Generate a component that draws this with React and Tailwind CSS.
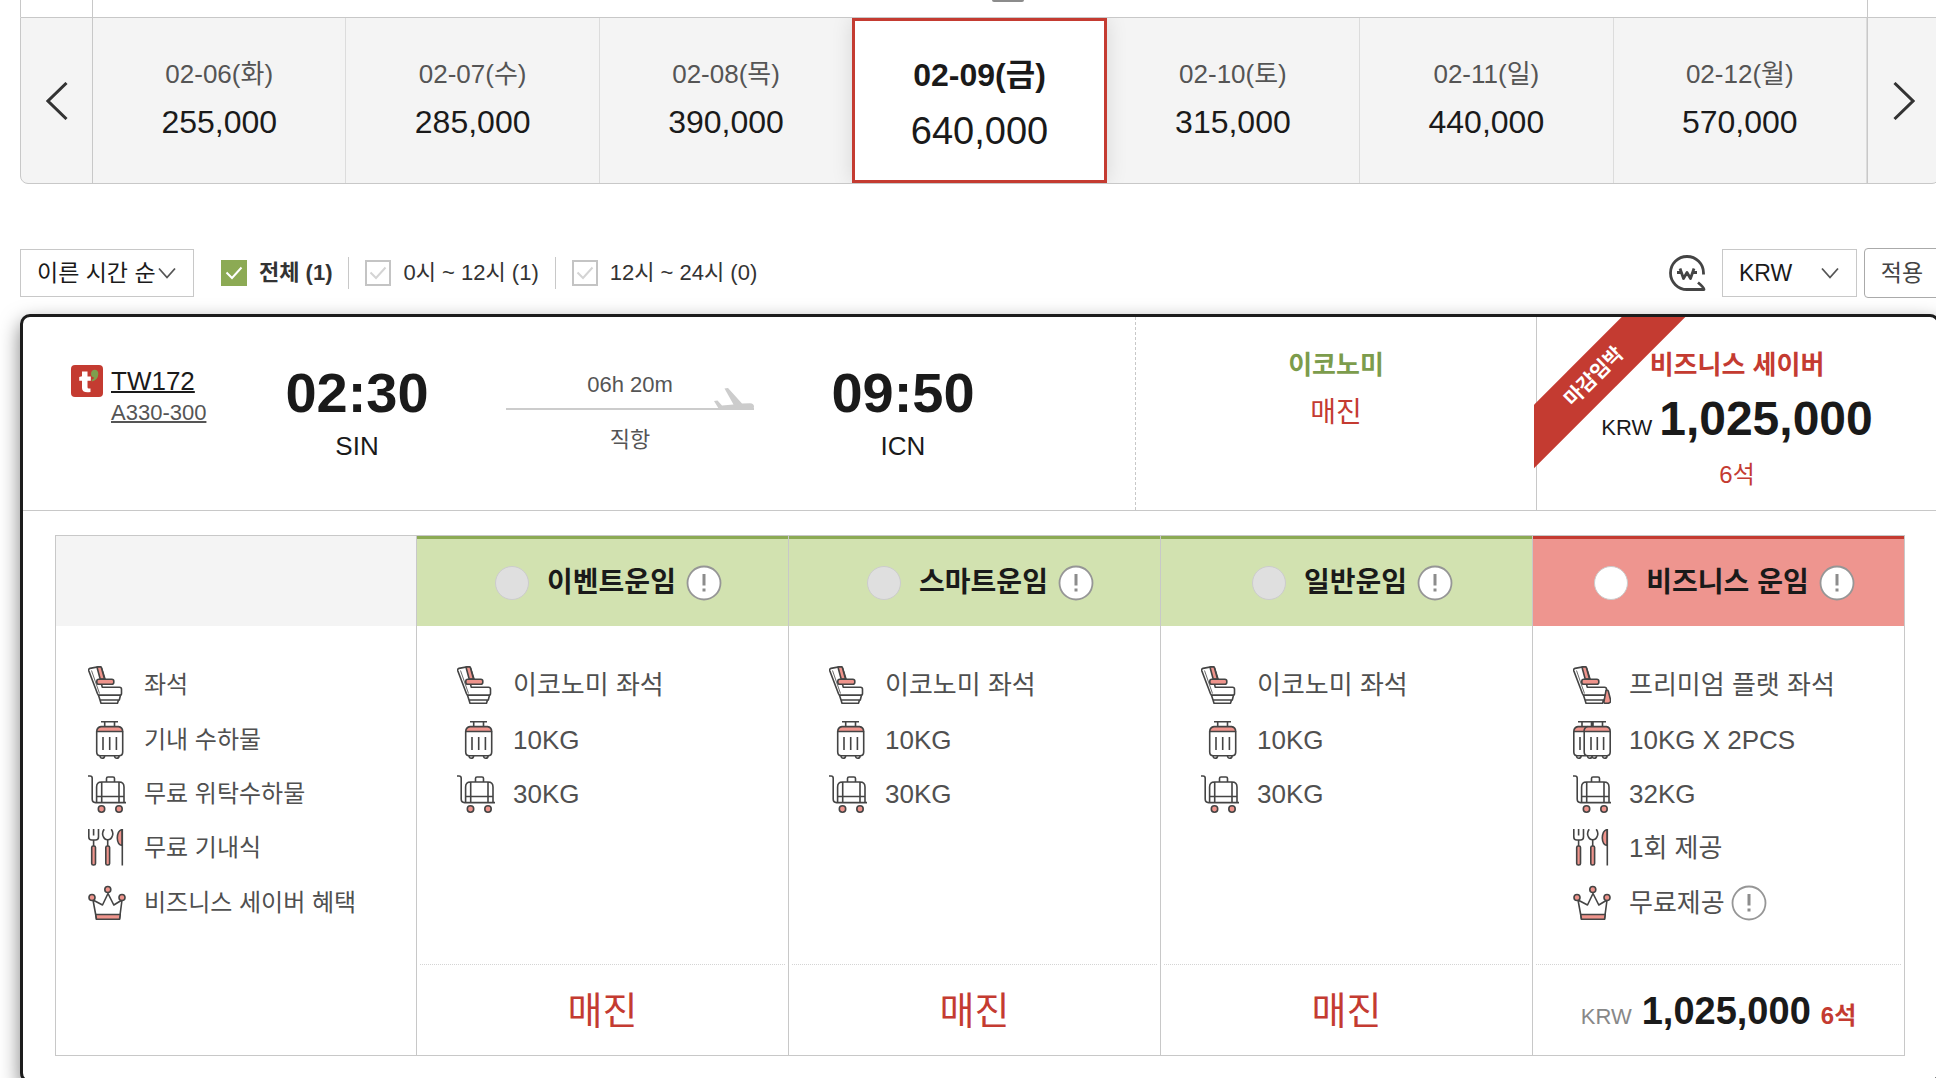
import { useState } from 'react'
import clsx from 'clsx'

const DATES = [
  { id: '0206', date: '02-06(화)', price: '255,000' },
  { id: '0207', date: '02-07(수)', price: '285,000' },
  { id: '0208', date: '02-08(목)', price: '390,000' },
  { id: '0209', date: '02-09(금)', price: '640,000' },
  { id: '0210', date: '02-10(토)', price: '315,000' },
  { id: '0211', date: '02-11(일)', price: '440,000' },
  { id: '0212', date: '02-12(월)', price: '570,000' },
]

const TIME_FILTERS = [
  { id: 'all', label: '전체 (1)' },
  { id: 'am', label: '0시 ~ 12시 (1)' },
  { id: 'pm', label: '12시 ~ 24시 (0)' },
]

const LEGEND = [
  { icon: SeatIcon, text: '좌석' },
  { icon: CarryOnIcon, text: '기내 수하물' },
  { icon: TrolleyIcon, text: '무료 위탁수하물' },
  { icon: MealIcon, text: '무료 기내식' },
  { icon: CrownIcon, text: '비즈니스 세이버 혜택' },
]

const ECONOMY_ITEMS = [
  { icon: SeatIcon, text: '이코노미 좌석' },
  { icon: CarryOnIcon, text: '10KG' },
  { icon: TrolleyIcon, text: '30KG' },
]

const FARES = [
  { id: 'event', name: '이벤트운임', soldOut: true, items: ECONOMY_ITEMS },
  { id: 'smart', name: '스마트운임', soldOut: true, items: ECONOMY_ITEMS },
  { id: 'normal', name: '일반운임', soldOut: true, items: ECONOMY_ITEMS },
  {
    id: 'business',
    name: '비즈니스 운임',
    business: true,
    items: [
      { icon: FlatSeatIcon, text: '프리미엄 플랫 좌석' },
      { icon: DoubleCarryOnIcon, text: '10KG X 2PCS' },
      { icon: TrolleyIcon, text: '32KG' },
      { icon: MealIcon, text: '1회 제공' },
      { icon: CrownIcon, text: '무료제공', info: true },
    ],
  },
]

function LineIcon({ children }) {
  return (
    <svg
      viewBox="0 0 38 38"
      className="size-[38px] shrink-0"
      fill="none"
      stroke="#444"
      strokeWidth="1.6"
      strokeLinejoin="round"
      aria-hidden="true"
    >
      {children}
    </svg>
  )
}

function SeatBody() {
  return (
    <>
      <path d="M.7 4.5Q.3 2.8 2 2.4L11 .6q2-.3 2.6 1.6L17 13l-3.500 5 .7 3.200H31.500q2 0 2 2V27.500q0 1.800-2 1.800H11.500q-1.500 0-2-1.500Z" />
      <path d="M3.500 4.500 11.500 27.500" strokeWidth=".8" />
      <path d="M9 1.200 12.200.8q1 0 1.300 1.200L16.500 13h-4.300Z" fill="#ef948c" />
      <rect x="8.800" y="13.200" width="17" height="5" rx="2" fill="#ef948c" />
      <path d="M10.500 29.300h22l-1.200 4.700H12ZM12 34h18.500l-1 3.300H13Z" />
    </>
  )
}

function SeatIcon() {
  return (
    <LineIcon>
      <SeatBody />
    </LineIcon>
  )
}

function FlatSeatIcon() {
  return (
    <LineIcon>
      <SeatBody />
      <path d="M33 24.500q1.800-.8 2.400 1l2.200 8.500q.4 3-2.600 3.300h-2.500q-2 0-1.500-2Z" fill="#ef948c" />
    </LineIcon>
  )
}

function CarryOnIcon() {
  return (
    <LineIcon>
      <path d="M13 .8H30M16.700.7V5.500M26.500.7V5.500" />
      <path d="M8.700 10.500Q9 6 13 5.600H30.500Q34.500 6 34.700 10.500Z" fill="#ef948c" />
      <path d="M8.700 10.500V31q0 3.700 3.700 3.700H31q3.700 0 3.700-3.700V10.500" />
      <path d="M15 16V29M21.700 16V29M28.400 16V29" />
      <path d="M12 35q.3 2.200 2.300 2.200T16.700 35M26.500 35q.3 2.200 2.300 2.200T31.200 35" />
    </LineIcon>
  )
}

function DoubleCarryOnIcon() {
  return (
    <LineIcon>
      <path d="M5 .8H33M9 .7V5.500M18.500 .7V5.500M20 .7V5.500M29.500.7V5.500" />
      <path d="M.8 10.500Q1 6 5 5.600H33.300Q37.200 6 37.200 10.500Z" fill="#ef948c" />
      <path d="M11 10.500Q11.200 6.500 14.500 5.600" />
      <path d="M.8 10.500V31q0 3.700 3.700 3.700H13.500M11.200 10.500V31q0 3.700 3.700 3.700H33.500q3.700 0 3.700-3.700V10.500" />
      <path d="M7 16V29M18 16V29M24.300 16V29M30.600 16V29" />
      <path d="M3.500 35q.3 2.200 2.300 2.200T8.200 35M14.500 35q.3 2.200 2.300 2.200T19.200 35M19 35q.3 2.200 2.300 2.200T23.700 35M29.500 35q.3 2.200 2.300 2.200T34.200 35" />
    </LineIcon>
  )
}

function TrolleyIcon() {
  return (
    <LineIcon>
      <path d="M0 1H2Q4.200 1 4.200 3.200V24Q4.200 27.600 7.500 27.600H38" />
      <path d="M8.600 27.500V12Q8.600 7 13.500 7H31Q36 7 36 12V27.500M8.600 21.500H36M13.700 7V27.500M31 7V27.500" />
      <path d="M18.500 7V3.500q0-1.500 1.500-1.500h5q1.500 0 1.500 1.500V7" />
      <circle cx="13.500" cy="34" r="3.200" fill="#ef948c" />
      <circle cx="31" cy="34" r="3.200" fill="#ef948c" />
    </LineIcon>
  )
}

function MealIcon() {
  return (
    <LineIcon>
      <path d="M.8 0V8q0 3 3 3H7.500q3 0 3-3V0M5.600 0V6.500M5.600 11V17M19.700 10.800V17" />
      <path d="M16.200.2Q14 3 14.800 6.200 16.200 10.800 19.700 10.800T24.600 6.200Q25.400 3 23.200.2" />
      <rect x="3.700" y="17" width="3.800" height="19" rx="1.600" fill="#ef948c" />
      <rect x="17.800" y="17" width="3.800" height="19" rx="1.600" fill="#ef948c" />
      <path d="M34.200 16.500Q29.500 16 29.300 9 29.500 1.500 34.200.5Z" fill="#ef948c" />
      <path d="M34.300 0V36.500" />
    </LineIcon>
  )
}

function CrownIcon() {
  return (
    <LineIcon>
      <path d="M5 16 8.500 35H31.500L34 16 25.800 21 20 9.500 14.500 21Z" />
      <path d="M7.800 30.500H32.200L31.500 35.300H8.500Z" fill="#ef948c" />
      <circle cx="19.800" cy="5.500" r="3" fill="#ef948c" />
      <circle cx="4" cy="13.500" r="3" fill="#ef948c" />
      <circle cx="34" cy="13.500" r="3" fill="#ef948c" />
    </LineIcon>
  )
}

function Chevron({ className }) {
  return (
    <svg viewBox="0 0 18 12" className={clsx('h-3 w-[18px]', className)} fill="none" stroke="#555" strokeWidth="1.800" aria-hidden="true">
      <path d="M1 1.500 9 10.500 17 1.500" />
    </svg>
  )
}

function InfoButton({ label }) {
  return (
    <button type="button" aria-label={label} className="shrink-0">
      <svg viewBox="0 0 36 36" className="size-9" aria-hidden="true">
        <circle cx="18" cy="18" r="16.500" fill="#fff" stroke="#969696" strokeWidth="1.800" />
        <path d="M18 9V20.500M18 23.500V26.500" stroke="#8c8c8c" strokeWidth="3" />
      </svg>
    </button>
  )
}

function DateStrip({ selected, onSelect }) {
  return (
    <section>
      <div className="flex h-[17px] border-l border-[#c8c8c8]">
        <div className="w-[72px] border-r border-[#c8c8c8]" />
        <div className="flex flex-1 justify-center pl-14">
          <div className="h-0.5 w-8 rounded-b-full bg-[#8c8c8c]" />
        </div>
        <div className="w-[73px] border-l border-[#c8c8c8]" />
      </div>
      <div className="flex h-[167px] overflow-hidden rounded-b-lg border border-[#c8c8c8] bg-[#f4f4f4]">
        <button type="button" aria-label="이전" className="flex w-[72px] items-center justify-center border-r border-[#c8c8c8]">
          <svg viewBox="0 0 22 38" className="h-[38px] w-[22px]" fill="none" stroke="#333" strokeWidth="3" aria-hidden="true">
            <path d="M20.500 1 2 19 20.500 37" />
          </svg>
        </button>
        <div className="grid flex-1 grid-cols-7 overflow-hidden">
          {DATES.map((item) => (
            <button
              key={item.id}
              type="button"
              onClick={() => onSelect(item.id)}
              className={clsx(
                'flex flex-col items-center',
                item.id === selected
                  ? 'relative z-10 -ml-px border-3 border-[#c43b31] bg-white pt-[34px] shadow-[0_0_20px_rgba(0,0,0,0.12)]'
                  : 'border-r border-[#dcdcdc] pt-9',
              )}
            >
              <span className={clsx('leading-10', item.id === selected ? 'text-[32px] font-bold text-[#1a1a1a]' : 'text-[26px] text-[#555]')}>
                {item.date}
              </span>
              <span className={clsx('leading-[48px] text-[#1a1a1a]', item.id === selected ? 'mt-3 text-[38px]' : 'mt-1 text-[32px]')}>
                {item.price}
              </span>
            </button>
          ))}
        </div>
        <button type="button" aria-label="다음" className="flex w-[72px] items-center justify-center border-l border-[#c8c8c8]">
          <svg viewBox="0 0 22 38" className="h-[38px] w-[22px]" fill="none" stroke="#333" strokeWidth="3" aria-hidden="true">
            <path d="M1.500 1 20 19 1.500 37" />
          </svg>
        </button>
      </div>
    </section>
  )
}

function TimeFilter({ label, checked, onChange }) {
  return (
    <label className="flex items-center gap-3">
      <span className="grid place-items-center">
        <input
          type="checkbox"
          checked={checked}
          onChange={onChange}
          className="col-start-1 row-start-1 size-[26px] appearance-none border-2 border-[#c4c4c4] bg-white checked:border-[#8caa54] checked:bg-[#8caa54]"
        />
        <svg
          viewBox="0 0 18 14"
          className="pointer-events-none col-start-1 row-start-1 h-3.5 w-[18px]"
          fill="none"
          stroke={checked ? '#fff' : '#d4d4d4'}
          strokeWidth="2"
          aria-hidden="true"
        >
          <path d="M1.500 6.500 7 12 16.500 1.500" />
        </svg>
      </span>
      <span className={clsx('text-[22px] leading-8 text-[#333]', checked && 'font-bold')}>{label}</span>
    </label>
  )
}

function Toolbar() {
  const [filter, setFilter] = useState('all')

  return (
    <div className="mt-16 flex h-[50px] items-center">
      <div className="relative flex items-center">
        <select
          aria-label="정렬"
          className="h-12 w-[174px] appearance-none border border-[#c8c8c8] bg-white pl-4 text-[23px] text-[#1a1a1a]"
        >
          <option>이른 시간 순</option>
          <option>늦은 시간 순</option>
        </select>
        <Chevron className="pointer-events-none absolute right-[18px]" />
      </div>

      <div className="ml-[27px] flex items-center divide-x divide-[#c8c8c8]">
        {TIME_FILTERS.map((item) => (
          <div key={item.id} className="px-4 first:pl-0">
            <TimeFilter label={item.label} checked={filter === item.id} onChange={() => setFilter(item.id)} />
          </div>
        ))}
      </div>

      <div className="ml-auto flex items-center">
        <svg viewBox="0 0 38 38" className="mr-4 size-[38px]" fill="none" stroke="#444" strokeWidth="2.800" aria-hidden="true">
          <path d="M35.500 20.500V19A16.500 16.500 0 1 0 19 35.500H36Q36 33.500 30 28.500" strokeLinejoin="round" />
          <path d="M12 14.500 15.500 24.500 19 18.500 22.500 24.500 26 14.500M9 18.500H13.500M24.500 18.500H29" strokeLinejoin="round" />
        </svg>
        <div className="relative flex items-center">
          <select
            aria-label="통화"
            className="h-12 w-[135px] appearance-none border border-[#c8c8c8] bg-white pl-4 text-[23px] text-[#1a1a1a]"
          >
            <option>KRW</option>
            <option>USD</option>
          </select>
          <Chevron className="pointer-events-none absolute right-[18px]" />
        </div>
        <button type="button" className="ml-[7px] h-[50px] w-[76px] rounded border border-[#aaa] text-[23px] text-[#444]">
          적용
        </button>
      </div>
    </div>
  )
}

function Airport({ time, code }) {
  return (
    <div className="w-[212px] text-center text-[#1a1a1a]">
      <p className="text-[56px] leading-[56px] font-bold">{time}</p>
      <p className="mt-2 text-[26px] leading-[34px]">{code}</p>
    </div>
  )
}

function FlightSummary() {
  return (
    <div className="flex h-[194px] border-b border-[#c8c8c8]">
      <div className="flex flex-1 pt-12 pl-12">
        <div className="flex w-[180px] items-start gap-2">
          <svg viewBox="0 0 32 32" className="size-8 shrink-0" aria-hidden="true">
            <rect width="32" height="32" rx="4" fill="#c43b31" />
            <path d="M11 6.500h5.500v5h3.300v4.300h-3.300v6.400q0 1.300 1.500 1.200h1.500v3.600q-8.500 1.300-8.500-4V15.800H8.200V12L11 11.300Z" fill="#fff" />
            <path d="M20 9q0-4 3.700-4.200Q27.500 5 27.300 9.300 27 15 20.800 16.500V14.700Q23.200 13.800 23 12.500 20 12 20 9Z" fill="#7f9f4e" />
          </svg>
          <div className="flex flex-col items-start">
            <a href="#flight" className="text-[26px] leading-8 text-[#1a1a1a] underline decoration-2">
              TW172
            </a>
            <a href="#aircraft" className="text-[22px] leading-8 text-[#555] underline decoration-2">
              A330-300
            </a>
          </div>
        </div>

        <Airport time="02:30" code="SIN" />

        <div className="mx-[43px] w-[248px] pt-1 text-center text-[22px] leading-8 text-[#555]">
          <p>06h 20m</p>
          <div className="relative h-[9px] border-b-2 border-[#ccc]">
            <svg viewBox="0 0 40 22" className="absolute right-0 -bottom-0.5 h-[22px] w-10" fill="#ccc" aria-hidden="true">
              <path d="M0 13 3.500 12.500 8 17.500 19.500 16.500 10.500.5 14 0 28 15.500 36 15.200Q40 15.500 40 18.500T37 22H5.500Z" />
            </svg>
          </div>
          <p className="mt-3.5">직항</p>
        </div>

        <Airport time="09:50" code="ICN" />
      </div>

      <div className="w-[401px] border-l border-dashed border-[#c8c8c8] pt-8 text-center">
        <p className="text-[26px] leading-8 font-bold text-[#7c9c4c]">이코노미</p>
        <p className="mt-4 text-[28px] leading-8 text-[#c43b31]">매진</p>
      </div>

      <div className="relative w-[401px] border-l border-[#c8c8c8] pt-8 text-center">
        <div className="absolute top-0 -left-[3px] size-[152px] overflow-hidden">
          <span className="absolute top-[37px] -left-[50px] w-[220px] -rotate-45 bg-[#c43b31] text-center text-[20px] leading-[45px] font-bold text-white">
            마감임박
          </span>
        </div>
        <p className="text-[26px] leading-8 font-bold text-[#c43b31]">비즈니스 세이버</p>
        <p className="mt-2.5 flex items-baseline justify-center gap-[7px] text-[#1a1a1a]">
          <span className="text-[22px] leading-none">KRW</span>
          <strong className="text-[48px] leading-[56px]">1,025,000</strong>
        </p>
        <p className="mt-3 text-[24px] leading-8 text-[#c43b31]">6석</p>
      </div>
    </div>
  )
}

function FeatureList({ items, legend = false }) {
  return (
    <ul className={clsx('grid h-[272px] grid-rows-5 text-[#505050]', legend ? 'pl-8 text-[24px]' : 'pl-10 text-[26px]')}>
      {items.map((item) => (
        <li key={item.text} className="flex items-center gap-[18px]">
          <item.icon />
          <span className="flex items-center gap-1.5 leading-8">
            {item.text}
            {item.info ? <InfoButton label={item.text} /> : null}
          </span>
        </li>
      ))}
    </ul>
  )
}

function FareTable() {
  return (
    <table className="w-full table-fixed border-collapse border border-[#c8c8c8]">
      <thead>
        <tr>
          <th className="w-[361px] bg-[#f4f4f4]" aria-label="구분" />
          {FARES.map((fare) => (
            <th key={fare.id} className="border-l border-[#c8c8c8] p-0">
              <div
                className={clsx(
                  'flex h-[90px] items-center justify-center border-t-3 pl-3',
                  fare.business ? 'border-[#c43b31] bg-[#ee958f]' : 'border-[#8caa54] bg-[#d2e2b0]',
                )}
              >
                <label className="flex items-center gap-[18px] text-[28px] leading-9 font-bold text-[#1a1a1a]">
                  <input
                    type="radio"
                    name="fare"
                    disabled={fare.soldOut}
                    className="size-[34px] appearance-none rounded-full border border-[#ccc] bg-white disabled:bg-[#dfdfdf]"
                  />
                  {fare.name}
                </label>
                <span className="ml-2.5 flex">
                  <InfoButton label={fare.name} />
                </span>
              </div>
            </th>
          ))}
        </tr>
      </thead>
      <tbody>
        <tr>
          <td className="px-0 pt-8 pb-[34px] align-top" rowSpan={2}>
            <FeatureList items={LEGEND} legend />
          </td>
          {FARES.map((fare) => (
            <td key={fare.id} className="border-l border-[#c8c8c8] px-0 pt-8 pb-[34px] align-top">
              <FeatureList items={fare.items} />
            </td>
          ))}
        </tr>
        <tr>
          {FARES.map((fare) => (
            <td key={fare.id} className="border-l border-[#c8c8c8] p-0">
              <div className="mx-[3px] flex h-[91px] items-baseline justify-center gap-2.5 border-t border-dotted border-[#d4d4d4] pt-[19px] leading-[54px]">
                {fare.soldOut ? (
                  <span className="text-[38px] text-[#c43b31]">매진</span>
                ) : (
                  <>
                    <span className="text-[22px] text-[#888]">KRW</span>
                    <strong className="text-[38px] text-[#1a1a1a]">1,025,000</strong>
                    <strong className="text-[24px] text-[#c43b31]">6석</strong>
                  </>
                )}
              </div>
            </td>
          ))}
        </tr>
      </tbody>
    </table>
  )
}

function App() {
  const [selected, setSelected] = useState('0209')

  return (
    <div className="h-screen overflow-hidden bg-white pl-5 font-['Liberation_Sans','Noto_Sans_CJK_KR',sans-serif]">
      <main className="-mr-1">
        <DateStrip selected={selected} onSelect={setSelected} />
        <Toolbar />
        <article className="mt-4 rounded-[10px] border-3 border-[#1c1c1c] bg-white shadow-[0_8px_20px_rgba(0,0,0,0.5)]">
          <FlightSummary />
          <div className="px-8 py-6">
            <FareTable />
          </div>
        </article>
      </main>
    </div>
  )
}

export default App
